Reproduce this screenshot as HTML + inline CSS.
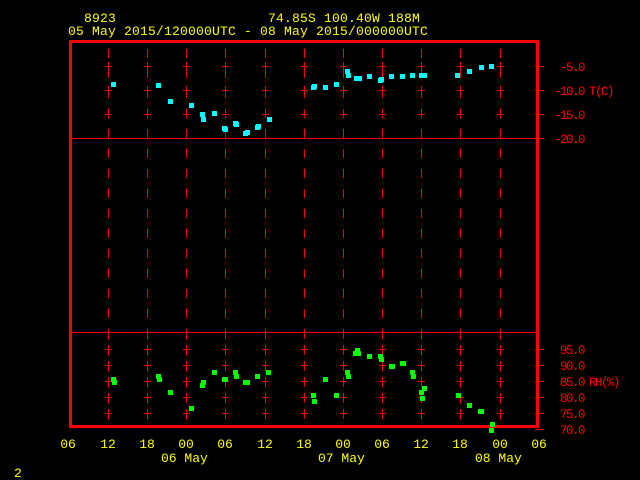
<!DOCTYPE html>
<html><head><style>
html,body{margin:0;padding:0;background:#000;width:640px;height:480px;overflow:hidden}
svg{display:block}
text{font-family:"Liberation Mono",monospace;font-size:13px}
.r text{font-size:12.5px;letter-spacing:-1.5px}
</style></head><body>
<svg width="640" height="480" xmlns="http://www.w3.org/2000/svg" shape-rendering="crispEdges">
<g fill="#ffff00" letter-spacing="0.2">
<text x="84" y="22">8923</text>
<text x="268" y="22">74.85S  100.40W   188M</text>
<text x="68" y="35">05 May 2015/120000UTC - 08 May 2015/000000UTC</text>
</g>
<g fill="#ffff00" text-anchor="middle" style="font-size:12.5px">
<text x="68" y="448">06</text><text x="108" y="448">12</text><text x="147" y="448">18</text>
<text x="186" y="448">00</text><text x="225" y="448">06</text><text x="265" y="448">12</text>
<text x="304" y="448">18</text><text x="343" y="448">00</text><text x="382" y="448">06</text>
<text x="421" y="448">12</text><text x="460" y="448">18</text><text x="500" y="448">00</text>
<text x="539" y="448">06</text>
</g>
<g fill="#ffff00" style="font-size:12.5px">
<text x="161" y="462">06 May</text><text x="318" y="462">07 May</text><text x="475" y="462">08 May</text>
<text x="14" y="477">2</text>
</g>
<g fill="#ff0000" class="r" text-anchor="end">
<text x="584" y="71">-5.0</text><text x="584" y="95">-10.0</text>
<text x="584" y="119">-15.0</text><text x="584" y="143">-20.0</text>
<text x="584" y="354">95.0</text><text x="584" y="370">90.0</text><text x="584" y="386">85.0</text>
<text x="584" y="402">80.0</text><text x="584" y="418">75.0</text><text x="584" y="434">70.0</text>
</g>
<g fill="#ff0000" class="r">
<text x="589" y="95">T(C)</text><text x="589" y="386">RH(%)</text>
</g>
<g stroke="#ff0000" stroke-width="1" fill="none">
<g stroke-dasharray="9,11">
<path d="M108.5 49V138M147.5 49V138M186.5 49V138M225.5 49V138M265.5 49V138M304.5 49V138M343.5 49V138M382.5 49V138M421.5 49V138M460.5 49V138M500.5 49V138"/>
<path d="M108.5 149V332M147.5 149V332M186.5 149V332M225.5 149V332M265.5 149V332M304.5 149V332M343.5 149V332M382.5 149V332M421.5 149V332M460.5 149V332M500.5 149V332"/>
</g>
<g stroke-dasharray="10,6">
<path d="M108.5 329V428M147.5 329V428M186.5 329V428M225.5 329V428M265.5 329V428M304.5 329V428M343.5 329V428M382.5 329V428M421.5 329V428M460.5 329V428M500.5 329V428"/>
</g>
<path d="M105 66.5h7M105 90.5h7M105 114.5h7M105 349.5h7M105 365.5h7M105 381.5h7M105 397.5h7M105 413.5h7M108.5 62v8M108.5 86v8M108.5 110v8M108.5 345v8M108.5 361v8M108.5 377v8M108.5 393v8M108.5 409v8"/>
<path d="M144 66.5h7M144 90.5h7M144 114.5h7M144 349.5h7M144 365.5h7M144 381.5h7M144 397.5h7M144 413.5h7M147.5 62v8M147.5 86v8M147.5 110v8M147.5 345v8M147.5 361v8M147.5 377v8M147.5 393v8M147.5 409v8"/>
<path d="M183 66.5h7M183 90.5h7M183 114.5h7M183 349.5h7M183 365.5h7M183 381.5h7M183 397.5h7M183 413.5h7M186.5 62v8M186.5 86v8M186.5 110v8M186.5 345v8M186.5 361v8M186.5 377v8M186.5 393v8M186.5 409v8"/>
<path d="M222 66.5h7M222 90.5h7M222 114.5h7M222 349.5h7M222 365.5h7M222 381.5h7M222 397.5h7M222 413.5h7M225.5 62v8M225.5 86v8M225.5 110v8M225.5 345v8M225.5 361v8M225.5 377v8M225.5 393v8M225.5 409v8"/>
<path d="M262 66.5h7M262 90.5h7M262 114.5h7M262 349.5h7M262 365.5h7M262 381.5h7M262 397.5h7M262 413.5h7M265.5 62v8M265.5 86v8M265.5 110v8M265.5 345v8M265.5 361v8M265.5 377v8M265.5 393v8M265.5 409v8"/>
<path d="M301 66.5h7M301 90.5h7M301 114.5h7M301 349.5h7M301 365.5h7M301 381.5h7M301 397.5h7M301 413.5h7M304.5 62v8M304.5 86v8M304.5 110v8M304.5 345v8M304.5 361v8M304.5 377v8M304.5 393v8M304.5 409v8"/>
<path d="M340 66.5h7M340 90.5h7M340 114.5h7M340 349.5h7M340 365.5h7M340 381.5h7M340 397.5h7M340 413.5h7M343.5 62v8M343.5 86v8M343.5 110v8M343.5 345v8M343.5 361v8M343.5 377v8M343.5 393v8M343.5 409v8"/>
<path d="M379 66.5h7M379 90.5h7M379 114.5h7M379 349.5h7M379 365.5h7M379 381.5h7M379 397.5h7M379 413.5h7M382.5 62v8M382.5 86v8M382.5 110v8M382.5 345v8M382.5 361v8M382.5 377v8M382.5 393v8M382.5 409v8"/>
<path d="M418 66.5h7M418 90.5h7M418 114.5h7M418 349.5h7M418 365.5h7M418 381.5h7M418 397.5h7M418 413.5h7M421.5 62v8M421.5 86v8M421.5 110v8M421.5 345v8M421.5 361v8M421.5 377v8M421.5 393v8M421.5 409v8"/>
<path d="M457 66.5h7M457 90.5h7M457 114.5h7M457 349.5h7M457 365.5h7M457 381.5h7M457 397.5h7M457 413.5h7M460.5 62v8M460.5 86v8M460.5 110v8M460.5 345v8M460.5 361v8M460.5 377v8M460.5 393v8M460.5 409v8"/>
<path d="M497 66.5h7M497 90.5h7M497 114.5h7M497 349.5h7M497 365.5h7M497 381.5h7M497 397.5h7M497 413.5h7M500.5 62v8M500.5 86v8M500.5 110v8M500.5 345v8M500.5 361v8M500.5 377v8M500.5 393v8M500.5 409v8"/>
<path d="M535 66.5h9M535 90.5h9M535 114.5h9M535 138.5h9M535 349.5h9M535 365.5h9M535 381.5h9M535 397.5h9M535 413.5h9M535 429.5h9"/>
<path d="M70 138.5H538M70 332.5H538"/>
</g>
<rect x="70.5" y="41.5" width="467" height="385" fill="none" stroke="#ff0000" stroke-width="3"/>
<g fill="#00ffff">
<rect x="111" y="82" width="5" height="5"/><rect x="156" y="83" width="5" height="5"/><rect x="168" y="99" width="5" height="5"/>
<rect x="189" y="103" width="5" height="5"/><rect x="200" y="112" width="5" height="5"/><rect x="201" y="117" width="5" height="5"/>
<rect x="212" y="111" width="5" height="5"/><rect x="222" y="126" width="5" height="5"/><rect x="223" y="127" width="5" height="5"/>
<rect x="233" y="121" width="5" height="5"/><rect x="234" y="122" width="5" height="5"/><rect x="243" y="131" width="5" height="5"/>
<rect x="245" y="130" width="5" height="5"/><rect x="255" y="125" width="5" height="5"/><rect x="256" y="124" width="5" height="5"/>
<rect x="267" y="117" width="5" height="5"/><rect x="311" y="85" width="5" height="5"/><rect x="312" y="84" width="5" height="5"/>
<rect x="323" y="85" width="5" height="5"/><rect x="334" y="82" width="5" height="5"/><rect x="345" y="69" width="5" height="5"/>
<rect x="346" y="73" width="5" height="5"/><rect x="354" y="76" width="5" height="5"/><rect x="357" y="76" width="5" height="5"/>
<rect x="367" y="74" width="5" height="5"/><rect x="378" y="78" width="5" height="5"/><rect x="379" y="77" width="5" height="5"/>
<rect x="389" y="74" width="5" height="5"/><rect x="400" y="74" width="5" height="5"/><rect x="410" y="73" width="5" height="5"/>
<rect x="419" y="73" width="5" height="5"/><rect x="422" y="73" width="5" height="5"/><rect x="455" y="73" width="5" height="5"/>
<rect x="467" y="69" width="5" height="5"/><rect x="479" y="65" width="5" height="5"/><rect x="489" y="64" width="5" height="5"/>
</g>
<g fill="#00ff00">
<rect x="111" y="377" width="5" height="5"/><rect x="112" y="380" width="5" height="5"/><rect x="156" y="374" width="5" height="5"/>
<rect x="157" y="377" width="5" height="5"/><rect x="168" y="390" width="5" height="5"/><rect x="189" y="406" width="5" height="5"/>
<rect x="200" y="383" width="5" height="5"/><rect x="201" y="380" width="5" height="5"/><rect x="212" y="370" width="5" height="5"/>
<rect x="222" y="377" width="6" height="5"/><rect x="233" y="370" width="5" height="5"/><rect x="234" y="374" width="5" height="5"/>
<rect x="243" y="380" width="7" height="5"/><rect x="255" y="374" width="5" height="5"/><rect x="266" y="370" width="5" height="5"/>
<rect x="311" y="393" width="5" height="5"/><rect x="312" y="399" width="5" height="5"/><rect x="323" y="377" width="5" height="5"/>
<rect x="334" y="393" width="5" height="5"/><rect x="345" y="370" width="5" height="5"/><rect x="346" y="374" width="5" height="5"/>
<rect x="355" y="348" width="5" height="5"/><rect x="353" y="351" width="8" height="5"/><rect x="367" y="354" width="5" height="5"/>
<rect x="378" y="354" width="5" height="5"/><rect x="379" y="357" width="5" height="5"/><rect x="389" y="364" width="6" height="5"/>
<rect x="400" y="361" width="6" height="5"/><rect x="410" y="370" width="5" height="5"/><rect x="411" y="374" width="5" height="5"/>
<rect x="419" y="390" width="5" height="5"/><rect x="422" y="386" width="5" height="5"/><rect x="420" y="396" width="5" height="5"/>
<rect x="456" y="393" width="5" height="5"/><rect x="467" y="403" width="5" height="5"/><rect x="478" y="409" width="6" height="5"/>
<rect x="490" y="422" width="5" height="5"/><rect x="489" y="428" width="5" height="5"/>
</g>
</svg>
</body></html>
